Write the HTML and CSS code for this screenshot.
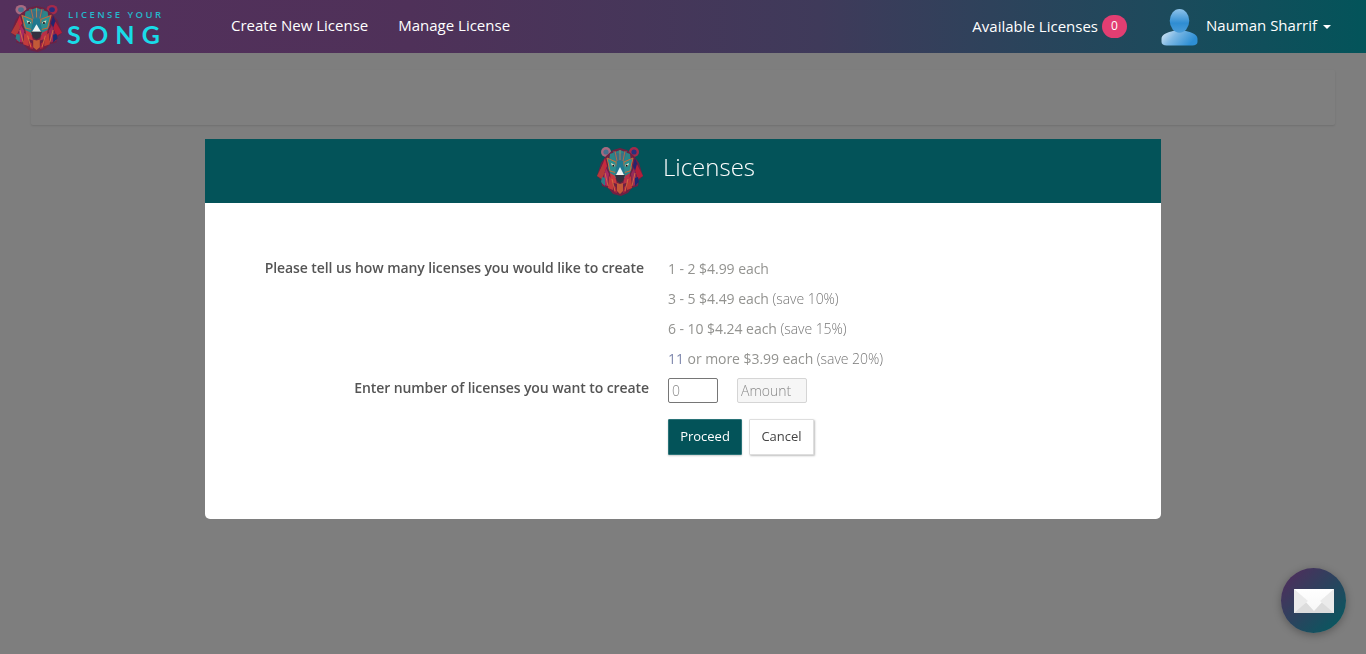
FILE: index.html
```html
<!DOCTYPE html>
<html lang="en">
<head>
<meta charset="utf-8">
<title>Licenses</title>
<link rel="stylesheet" href="styles.css">
</head>
<body>
<svg class="defs" width="0" height="0" aria-hidden="true">
  <defs>
    <symbol id="lion" viewBox="0 0 46 50" preserveAspectRatio="none">
      <circle cx="9" cy="6" r="5" fill="#a86a80"/>
      <circle cx="9" cy="6" r="2.6" fill="#49708e"/>
      <circle cx="37" cy="6" r="5" fill="#a42a4a"/>
      <circle cx="37" cy="6" r="2.6" fill="#27307e"/>
      <polygon points="9,10 16,4 23,2 30,4 37,10 42,17 46,30 42,34 41,40 35,42 31,47 24,50 16,48 11,42 5,40 4,34 0,30 4,17" fill="#6e2142"/>
      <polygon points="8,12 2,28 6,30 10,20" fill="#c9283f"/>
      <polygon points="6,18 0,30 5,33 8,25" fill="#b33a3a"/>
      <polygon points="9,22 5,38 10,40 12,28" fill="#a82a63"/>
      <polygon points="5,31 4,36 8,40 8,32" fill="#2c7d86"/>
      <polygon points="12,30 11,42 16,44 16,34" fill="#c23a3c"/>
      <polygon points="38,12 44,28 40,30 36,20" fill="#25246f"/>
      <polygon points="40,18 46,30 41,33 38,25" fill="#b21f3a"/>
      <polygon points="37,22 41,38 36,40 34,28" fill="#972a58"/>
      <polygon points="41,31 42,36 38,40 38,32" fill="#1d2a70"/>
      <polygon points="34,30 35,42 30,44 30,34" fill="#c03c34"/>
      <polygon points="13,8 23,4 33,8 35,22 31,32 15,32 11,22" fill="#2c8488"/>
      <polygon points="16,5 23,8 30,5 27,15 19,15" fill="#3b6f84"/>
      <polygon points="10,12 19,16 20,27 13,25" fill="#2d8d8e" stroke="#c8703c" stroke-width="1"/>
      <polygon points="36,12 27,16 26,27 33,25" fill="#2d8d8e" stroke="#c8683a" stroke-width="1"/>
      <polyline points="18,5 20,15 19,30" fill="none" stroke="#c8703f" stroke-width=".8"/>
      <polyline points="28,5 26,15 27,30" fill="none" stroke="#c8703f" stroke-width=".8"/>
      <polyline points="23,4 23,14" fill="none" stroke="#d08a4a" stroke-width=".7"/>
      <polygon points="14,17 18,19 17,21 15,20" fill="#e8dcc0"/>
      <polygon points="32,17 28,19 29,21 31,20" fill="#e8dcc0"/>
      <circle cx="16.300" cy="19.800" r="1" fill="#16161f"/>
      <circle cx="29.700" cy="19.800" r="1" fill="#16161f"/>
      <polygon points="20,15 26,15 28,28 18,28" fill="#20788f"/>
      <polygon points="23,21 27,29 19,29" fill="#eef2f1"/>
      <polygon points="18,29 28,29 26,35 23,37 20,35" fill="#33303f"/>
      <polygon points="13,27 18,30 20,38 14,36" fill="#c8393f"/>
      <polygon points="33,27 28,30 26,38 32,36" fill="#b83047"/>
      <polygon points="20,37 23,38 26,37 26,45 23,48 20,45" fill="#c25a38"/>
      <polygon points="16,39 19,41 20,47 17,46" fill="#a8243f"/>
      <polygon points="30,39 27,41 26,47 29,46" fill="#a8243f"/>
      <path d="M15 33l3 12M31 33l-3 12M8 27l3 13M38 27l-3 13" fill="none" stroke="#dd7a3c" stroke-width=".8"/>
    </symbol>
    <linearGradient id="userBody" x1="0" y1="0" x2="1" y2="0.4">
      <stop offset="0" stop-color="#e6eff8"/>
      <stop offset="0.45" stop-color="#7fb9e4"/>
      <stop offset="1" stop-color="#2e8fd4"/>
    </linearGradient>
    <linearGradient id="userHead" x1="0" y1="0" x2="0" y2="1">
      <stop offset="0" stop-color="#8fc3ea"/>
      <stop offset="0.6" stop-color="#2f8dd2"/>
      <stop offset="1" stop-color="#4a9cd8"/>
    </linearGradient>
    <linearGradient id="fabFlap" x1="0" y1="0" x2="0" y2="1">
      <stop offset="0" stop-color="#ffffff"/>
      <stop offset="1" stop-color="#f7f7f7"/>
    </linearGradient>
  </defs>
</svg>

<header class="topbar">
  <a class="brand" href="#">
    <svg class="brand-mark"><use href="#lion"/></svg>
    <span class="brand-text">
      <span class="brand-small">LICENSE YOUR</span>
      <span class="brand-big">SONG</span>
    </span>
  </a>
  <nav class="main-nav">
    <a href="#">Create New License</a>
    <a href="#">Manage License</a>
  </nav>
  <div class="top-right">
    <span class="avail">Available Licenses <span class="badge">0</span></span>
    <span class="user">
      <svg class="avatar" viewBox="0 0 36 36">
        <path d="M0.500 29c0-3.500 4-5.500 9.500-7 2.500-.7 4-1.500 4-2.500h8c0 1 1.500 1.800 4 2.500 5.500 1.500 9.500 3.500 9.500 7v3c0 2-2 3.500-5 3.500H5.500c-3 0-5-1.500-5-3.500z" fill="url(#userBody)"/>
        <ellipse cx="18" cy="11.500" rx="9.500" ry="11.500" fill="url(#userHead)"/>
      </svg>
      <span class="user-name">Nauman Sharrif</span>
      <span class="caret"></span>
    </span>
  </div>
</header>

<main class="page">
  <div class="panel"></div>
</main>

<div class="backdrop"></div>

<section class="modal">
  <div class="modal-head">
    <svg class="modal-mark"><use href="#lion"/></svg>
    <h2>Licenses</h2>
  </div>
  <div class="modal-body">
    <div class="lbl lbl-first">Please tell us how many licenses you would like to create</div>
    <ul class="prices">
      <li>1 - 2 $4.99 each</li>
      <li>3 - 5 $4.49 each <span class="save">(save 10%)</span></li>
      <li>6 - 10 $4.24 each <span class="save">(save 15%)</span></li>
      <li><span class="tint">11</span> or more $3.99 each <span class="save">(save 20%)</span></li>
    </ul>
    <div class="lbl lbl-second">Enter number of licenses you want to create</div>
    <div class="fields">
      <input class="qty" type="text" placeholder="0">
      <input class="amount" type="text" placeholder="Amount" disabled>
    </div>
    <div class="actions">
      <button class="btn btn-primary" type="button">Proceed</button>
      <button class="btn btn-plain" type="button">Cancel</button>
    </div>
  </div>
</section>

<button class="fab" type="button" aria-label="Messages">
  <svg viewBox="0 0 40 26" width="40" height="26">
    <rect width="40" height="24" y="1" fill="#ebebeb"/>
    <polygon points="0,25 13,12 20,17 27,12 40,25" fill="#dcdcdc"/>
    <polygon points="0,1 40,1 20,23" fill="url(#fabFlap)"/>
    <polygon points="0,1 0,25 14,13" fill="#ebebeb"/>
    <polygon points="40,1 40,25 26,13" fill="#ebebeb"/>
  </svg>
</button>
</body>
</html>
```
FILE: styles.css
```css
* { box-sizing: border-box; }
html, body { margin: 0; height: 100%; }
body {
  font-family: "Open Sans", "Liberation Sans", sans-serif;
  background: #fcfcfc;
  color: #555;
  overflow: hidden;
}
a { color: inherit; text-decoration: none; }
.defs { position: absolute; }

.topbar {
  position: relative;
  z-index: 20;
  height: 53px;
  display: flex;
  align-items: center;
  padding-left: 11px;
  background: linear-gradient(90deg, #54305c 0%, #4f3159 30%, #3f3a5a 60%, #1d4a5c 85%, #03545a 100%);
  color: #fff;
  font-size: 15px;
}
.brand { display: flex; align-items: center; width: 220px; }
.brand-mark { width: 51px; height: 48px; margin-top: 3px; flex: none; }
.brand-text { display: flex; flex-direction: column; gap: 6px; margin-left: 6px; margin-top: 0; }
.brand-small { font-size: 9.500px; line-height: 10px; letter-spacing: 2.450px; color: #25b8cc; font-weight: 600; white-space: nowrap; }
.brand-big { font-family: "Lato", sans-serif; font-size: 25px; line-height: 17px; letter-spacing: 7.200px; color: #19dbe8; font-weight: 700; margin-left: -1px; }
.main-nav { display: flex; gap: 30px; margin-top: -3px; }
.top-right { margin-left: auto; display: flex; align-items: center; margin-right: 35px; }
.avail { display: flex; align-items: center; gap: 4px; line-height: 20px; margin-top: -1px; }
.badge {
  display: inline-flex;
  align-items: center;
  justify-content: center;
  width: 25px;
  height: 23px;
  border-radius: 12px;
  background: #e23e72;
  font-size: 12px;
  font-weight: 400;
}
.avail { margin-top: -2px; }
.badge { margin-top: 1px; }
.user { display: flex; align-items: center; margin-left: 34px; }
.avatar { width: 37px; height: 37px; margin-top: 2px; }
.user-name { margin-left: 8px; margin-top: -3px; }
.caret {
  margin-left: 6px;
  margin-top: 0;
  border-top: 4px solid #fff;
  border-left: 4px solid transparent;
  border-right: 4px solid transparent;
}

.page { padding: 17px 31px 0; }
.panel {
  height: 55px;
  background: #fff;
  border-radius: 2px;
  box-shadow: 0 1px 2px rgba(0, 0, 0, .12);
}
.backdrop {
  position: fixed;
  inset: 0;
  z-index: 10;
  background: rgba(0, 0, 0, .5);
}

.modal {
  position: fixed;
  z-index: 30;
  left: 205px;
  top: 139px;
  width: 956px;
  background: #fff;
  border-radius: 0 0 5px 5px;
  overflow: hidden;
}
.modal-head {
  height: 64px;
  display: flex;
  align-items: center;
  justify-content: center;
  padding-right: 14px;
  background: #035359;
  color: #fff;
}
.modal-mark { width: 46px; height: 50px; margin-right: 20px; margin-top: 0; flex: none; }
.modal-head h2 { margin: -8px 0 0; font-size: 24px; line-height: 30px; font-weight: 300; }

.modal-body {
  display: grid;
  grid-template-columns: 444px 1fr;
  column-gap: 19px;
  padding: 51px 0 64px;
}
.lbl { text-align: right; font-size: 14px; font-weight: 600; color: #555; letter-spacing: -.09px; }
.lbl-first { padding-right: 5px; line-height: 20px; padding-top: 4px; }
.lbl-second { line-height: 20px; margin-top: 4px; grid-column: 1; }
.prices { margin: 0; padding: 0; list-style: none; font-size: 14px; line-height: 30px; font-weight: 400; color: #939390; letter-spacing: -.05px; }
.save { font-weight: 300; color: #777; }
.tint { color: #7f88ad; }
.fields { display: flex; gap: 19px; margin-top: 4px; }
.qty, .amount {
  height: 25px;
  padding: 0 3px 1px;
  font: 300 14px "Open Sans", sans-serif;
  border-radius: 2px;
}
.qty { width: 50px; border: 1px solid #767676; background: #fff; }
.amount { width: 70px; border: 1px solid #d5d5d5; background: #f6f6f6; }
.qty::placeholder, .amount::placeholder { color: #888; opacity: 1; }
.actions { grid-column: 2; display: flex; gap: 7px; margin-top: 16px; }
.btn {
  height: 36px;
  font: 400 13px/32px "Open Sans", sans-serif;
  padding: 0 0 2px;
  border-radius: 1px;
  cursor: pointer;
}
.btn-primary { width: 74px; background: #035359; color: #fff; border: 1px solid #2a7378; box-shadow: 0 1px 2px rgba(0,0,0,.2); }
.btn-plain { width: 65px; background: #fff; color: #444; border: 1px solid #dedede; box-shadow: 1px 1px 2px rgba(0,0,0,.25); }

.fab {
  position: fixed;
  z-index: 40;
  right: 20px;
  bottom: 21px;
  width: 65px;
  height: 65px;
  padding: 0;
  border: 0;
  border-radius: 50%;
  display: flex;
  align-items: center;
  justify-content: center;
  background: linear-gradient(135deg, #4d2f5c 10%, #045a60 95%);
  box-shadow: 0 2px 8px rgba(0, 0, 0, .3);
}
```
